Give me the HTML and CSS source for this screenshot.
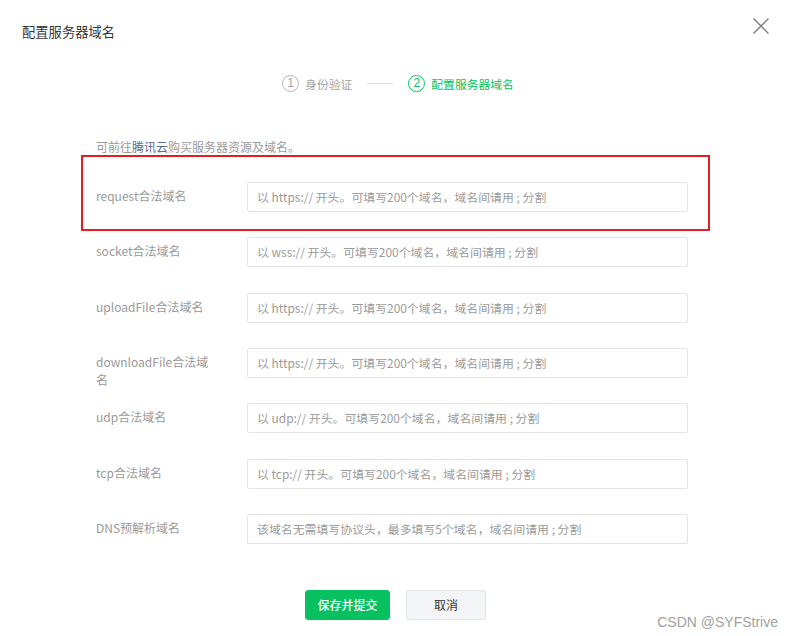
FILE: index.html
```html
<!DOCTYPE html>
<html lang="zh-CN">
<head>
<meta charset="utf-8">
<title>配置服务器域名</title>
<link rel="stylesheet" href="styles.css">
</head>
<body>
<div class="dialog">
  <div class="header">
    <h1 class="title">配置服务器域名</h1>
    <button class="close" aria-label="关闭">
      <svg width="18" height="18" viewBox="0 0 18 18"><path d="M1.5 1.5 L16.5 16.5 M16.5 1.5 L1.5 16.5" stroke="#7a7a7a" stroke-width="1.3" fill="none"/></svg>
    </button>
  </div>
  <div class="steps">
    <div class="step done"><span class="num">1</span><span class="step-text">身份验证</span></div>
    <div class="step-line"></div>
    <div class="step active"><span class="num">2</span><span class="step-text">配置服务器域名</span></div>
  </div>
  <div class="form">
    <p class="notice">可前往<a class="link" href="#">腾讯云</a>购买服务器资源及域名。</p>
    <div class="rows">
      <div class="row">
        <label class="label">request合法域名</label>
        <div class="input">以 https:// 开头。可填写200个域名，域名间请用 ; 分割</div>
        <div class="mark"></div>
      </div>
      <div class="row">
        <label class="label">socket合法域名</label>
        <div class="input">以 wss:// 开头。可填写200个域名，域名间请用 ; 分割</div>
      </div>
      <div class="row">
        <label class="label">uploadFile合法域名</label>
        <div class="input">以 https:// 开头。可填写200个域名，域名间请用 ; 分割</div>
      </div>
      <div class="row">
        <label class="label">downloadFile合法域名</label>
        <div class="input">以 https:// 开头。可填写200个域名，域名间请用 ; 分割</div>
      </div>
      <div class="row">
        <label class="label">udp合法域名</label>
        <div class="input">以 udp:// 开头。可填写200个域名，域名间请用 ; 分割</div>
      </div>
      <div class="row">
        <label class="label">tcp合法域名</label>
        <div class="input">以 tcp:// 开头。可填写200个域名，域名间请用 ; 分割</div>
      </div>
      <div class="row">
        <label class="label">DNS预解析域名</label>
        <div class="input">该域名无需填写协议头，最多填写5个域名，域名间请用 ; 分割</div>
      </div>
    </div>
  </div>
  <div class="actions">
    <button class="btn primary">保存并提交</button>
    <button class="btn default">取消</button>
  </div>
  <div class="watermark">CSDN @SYFStrive</div>
</div>
</body>
</html>
```

FILE: styles.css
```css
* { box-sizing: border-box; }
html, body {
  margin: 0;
  padding: 0;
  background: #fff;
}
body {
  font-family: "Noto Sans CJK SC", "Liberation Sans", sans-serif;
  color: #353535;
}
.dialog {
  position: relative;
  width: 794px;
  height: 636px;
  overflow: hidden;
}
.header {
  position: relative;
  height: 63px;
  padding: 22px 0 0 22px;
}
.title {
  margin: 0;
  font-size: 13.3px;
  font-weight: normal;
  line-height: 20px;
  color: #353535;
}
.close {
  position: absolute;
  top: 17px;
  left: 752px;
  padding: 0;
  border: 0;
  background: none;
  width: 18px;
  height: 18px;
}
.close svg { display: block; }
.steps {
  display: flex;
  justify-content: center;
  align-items: center;
  height: 40px;
  margin-left: 2px;
}
.step {
  display: flex;
  align-items: center;
  gap: 6px;
  font-size: 11.8px;
  color: #a3a3a3;
}
.num {
  width: 17px;
  height: 17px;
  border: 1px solid #b5b5b5;
  border-radius: 50%;
  display: flex;
  align-items: center;
  justify-content: center;
  font-family: "Liberation Sans", sans-serif;
  font-size: 12px;
  line-height: 1;
}
.step.active { color: #07c160; }
.step.active .num { border-color: #07c160; }
.step-line {
  width: 26px;
  height: 1px;
  background: #dedede;
  margin: 0 15px;
}
.form {
  padding-left: 96px;
  margin-top: 31px;
}
.notice {
  margin: 0;
  font-size: 12px;
  line-height: 18px;
  color: #9a9a9a;
  height: 48px;
  padding-top: 4px;
}
.link {
  color: #576b95;
  text-decoration: none;
}
.rows {
  display: flex;
  flex-direction: column;
  gap: 25.33px;
}
.row {
  position: relative;
  display: flex;
  align-items: flex-start;
  height: 30px;
}
.label {
  width: 151px;
  padding-top: 5px;
  padding-right: 36px;
  font-size: 12px;
  line-height: 18px;
  color: #9a9a9a;
  word-break: break-all;
}
.input {
  width: 441px;
  height: 30px;
  border: 1px solid #e4e4e4;
  border-radius: 2px;
  padding-left: 9px;
  font-size: 11.9px;
  line-height: 28px;
  color: #9a9a9a;
  white-space: nowrap;
}
.mark {
  position: absolute;
  left: -15px;
  top: -27px;
  width: 629px;
  height: 76px;
  border: 2px solid #e02020;
  pointer-events: none;
}
.actions {
  display: flex;
  justify-content: center;
  gap: 16px;
  margin-top: 46px;
  padding-right: 3px;
}
.btn {
  height: 30px;
  border-radius: 3px;
  font-family: "Noto Sans CJK SC", sans-serif;
  font-size: 12px;
  padding: 0;
  cursor: pointer;
}
.btn.primary {
  width: 85px;
  background: #07c160;
  border: 1px solid #07c160;
  color: #fff;
  font-weight: 500;
}
.btn.default {
  width: 80px;
  background: #f4f5f7;
  border: 1px solid #e2e3e5;
  color: #353535;
}
.watermark {
  position: absolute;
  right: 16px;
  bottom: 6px;
  font-family: "Liberation Sans", sans-serif;
  font-size: 14px;
  color: #9f9f9f;
}
```
